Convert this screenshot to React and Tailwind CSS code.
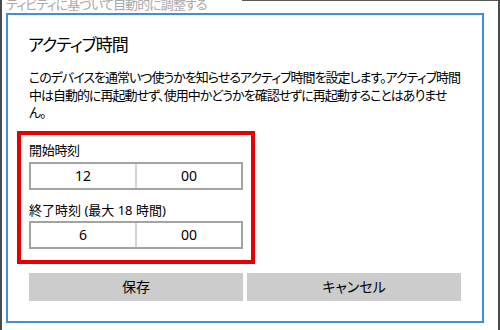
import React from 'react';

const TimeInput = ({ hour, minute }) => (
  <div className="flex h-[28px] border-2 border-[#a3a3a3] bg-white text-[14px]">
    <div className="flex-1 flex items-center justify-center">{hour}</div>
    <div className="flex-1 flex items-center justify-center border-l-2 border-[#d4d4d4]">{minute}</div>
  </div>
);

const App = () => {
  return (
    <div
      className="relative w-[500px] h-[330px] overflow-hidden bg-white border-l-2 border-r-2 border-[#4a4a4a] text-black [font-feature-settings:'palt']"
      style={{ fontFamily: '"Noto Sans", "Noto Sans CJK JP", sans-serif' }}
    >
      <div className="absolute top-0 left-[240px] right-0 h-px bg-[#5a5a5a]" />

      {/* window behind the dialog */}
      <div className="h-[13px] overflow-hidden">
        <div className="-mt-[5px] pl-[4px] text-[13px] leading-[18px] tracking-[-0.9px] text-[#a8a8a8] whitespace-nowrap">
          ティビティに基づいて自動的に調整する
        </div>
      </div>

      {/* dialog */}
      <div className="ml-[4px] w-[478px] h-[310px] border-2 border-[#3f8fdc] bg-white px-[21px] pt-[16px]">
        <h1 className="-ml-[1px] text-[17px] leading-[28px] tracking-[-1px] font-normal">アクティブ時間</h1>
        <p className="mt-[10px] text-[13px] leading-[17.5px] tracking-[-1px] whitespace-nowrap">
          このデバイスを通常いつ使うかを知らせるアクティブ時間を設定します。アクティブ時間
          <br />
          中は自動的に再起動せず、使用中かどうかを確認せずに再起動することはありませ
          <br />
          ん。
        </p>

        <div className="mt-[9px] -ml-[12px] w-[238px] border-4 border-[#e60000] px-[8px] pt-[6px] pb-[11px]">
          <div className="text-[13px] leading-[18px] tracking-[-0.3px]">開始時刻</div>
          <div className="mt-[3px]">
            <TimeInput hour="12" minute="00" />
          </div>
          <div className="mt-[11px] text-[13px] leading-[18px]">終了時刻 (最大 18 時間)</div>
          <div className="mt-[2px]">
            <TimeInput hour="6" minute="00" />
          </div>
        </div>

        <div className="mt-[9px] flex gap-[4px]">
          <button className="flex-1 h-[28px] bg-[#cccccc] text-[14px]">保存</button>
          <button className="flex-1 h-[28px] bg-[#cccccc] text-[14px]">キャンセル</button>
        </div>
      </div>
    </div>
  );
};

export default App;
